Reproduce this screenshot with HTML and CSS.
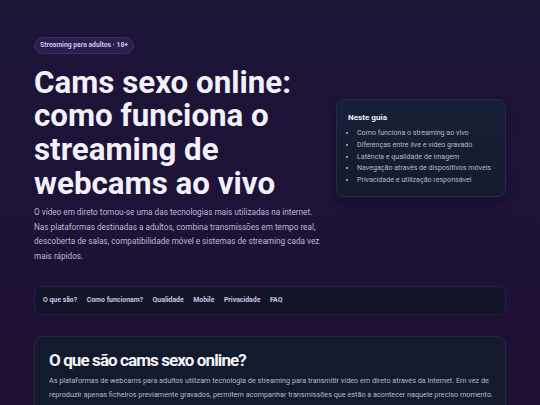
FILE: index.html
```html
<!DOCTYPE html>
<html lang="pt">
<head>
<meta charset="utf-8">
<title>Cams sexo online</title>
<link rel="stylesheet" href="styles.css">
</head>
<body>
<div class="page">
  <header class="hero">
    <div class="hero-main">
      <span class="badge">Streaming para adultos · 18+</span>
      <h1 class="title">Cams sexo online: como funciona o streaming de webcams ao vivo</h1>
      <p class="lead">O vídeo em direto tornou-se uma das tecnologias mais utilizadas na internet. Nas plataformas destinadas a adultos, combina transmissões em tempo real, descoberta de salas, compatibilidade móvel e sistemas de streaming cada vez mais rápidos.</p>
    </div>
    <aside class="guide">
      <h2 class="guide-title">Neste guia</h2>
      <ul class="guide-list">
        <li>Como funciona o streaming ao vivo</li>
        <li>Diferenças entre live e vídeo gravado</li>
        <li>Latência e qualidade de imagem</li>
        <li>Navegação através de dispositivos móveis</li>
        <li>Privacidade e utilização responsável</li>
      </ul>
    </aside>
  </header>
  <nav class="toc">
    <a href="#">O que são?</a>
    <a href="#">Como funcionam?</a>
    <a href="#">Qualidade</a>
    <a href="#">Mobile</a>
    <a href="#">Privacidade</a>
    <a href="#">FAQ</a>
  </nav>
  <section class="card">
    <h2 class="card-title">O que são cams sexo online?</h2>
    <p class="card-text">As plataformas de webcams para adultos utilizam tecnologia de streaming para transmitir vídeo em direto através da internet. Em vez de reproduzir apenas ficheiros previamente gravados, permitem acompanhar transmissões que estão a acontecer naquele preciso momento.</p>
  </section>
</div>
</body>
</html>
```
FILE: styles.css
```css
html, body {
  margin: 0;
  padding: 0;
}
body {
  background: linear-gradient(180deg, #1b1536 0%, #1e1238 45%, #1d1032 100%);
  height: 405px;
  font-family: Roboto, "Noto Sans", sans-serif;
  color: #e8e4f4;
  overflow: hidden;
}
.page {
  width: 472px;
  margin: 0 auto;
  padding-top: 37px;
}
.hero {
  display: grid;
  grid-template-columns: 1fr 170px;
  gap: 2px;
  align-items: center;
}
.hero-main {
  display: flex;
  flex-direction: column;
  align-items: flex-start;
}
.badge {
  font-size: 6.8px;
  font-weight: 700;
  color: #cdbff0;
  background: #2a1e4c;
  border: 1px solid #3a2d62;
  border-radius: 10px;
  padding: 4px 5px;
  line-height: 7px;
}
.title {
  margin: 11.5px 0 5px;
  font-size: 31.3px;
  line-height: 33.7px;
  font-weight: 700;
  color: #f2f0fa;
}
.lead {
  margin: 0;
  max-width: 290px;
  font-size: 8.2px;
  line-height: 14.4px;
  color: #bfb8d3;
}
.guide {
  background: linear-gradient(180deg, #182038 0%, #141a2e 100%);
  border: 1px solid #262b45;
  border-radius: 8px;
  padding: 12px 11px 11px;
  margin-top: -3px;
  box-shadow: 0 4px 10px rgba(8, 6, 20, 0.35);
}
.guide-title {
  margin: 0 0 4px;
  font-size: 8.1px;
  line-height: 11px;
  font-weight: 700;
  color: #f0eef8;
}
.guide-list {
  margin: 0;
  padding-left: 9px;
  font-size: 7.1px;
  line-height: 11.6px;
  color: #b8b4cc;
}
.toc {
  margin-top: 23px;
  display: flex;
  gap: 9.5px;
  background: #12142a;
  border: 1px solid #1f2240;
  border-radius: 8px;
  padding: 9px 8px;
}
.toc a {
  font-size: 6.9px;
  font-weight: 700;
  color: #cbc3e4;
  text-decoration: none;
  line-height: 9px;
}
.card {
  margin-top: 21px;
  background: #141a2e;
  border: 1px solid #222842;
  border-radius: 9px;
  padding: 12px 12px 14px 14px;
}
.card-title {
  margin: 0 0 3px;
  font-size: 17px;
  font-weight: 700;
  line-height: 22px;
  letter-spacing: -0.9px;
  color: #f4f2fa;
}
.card-text {
  margin: 0;
  font-size: 7.25px;
  line-height: 14px;
  color: #bbb8cc;
}
```
